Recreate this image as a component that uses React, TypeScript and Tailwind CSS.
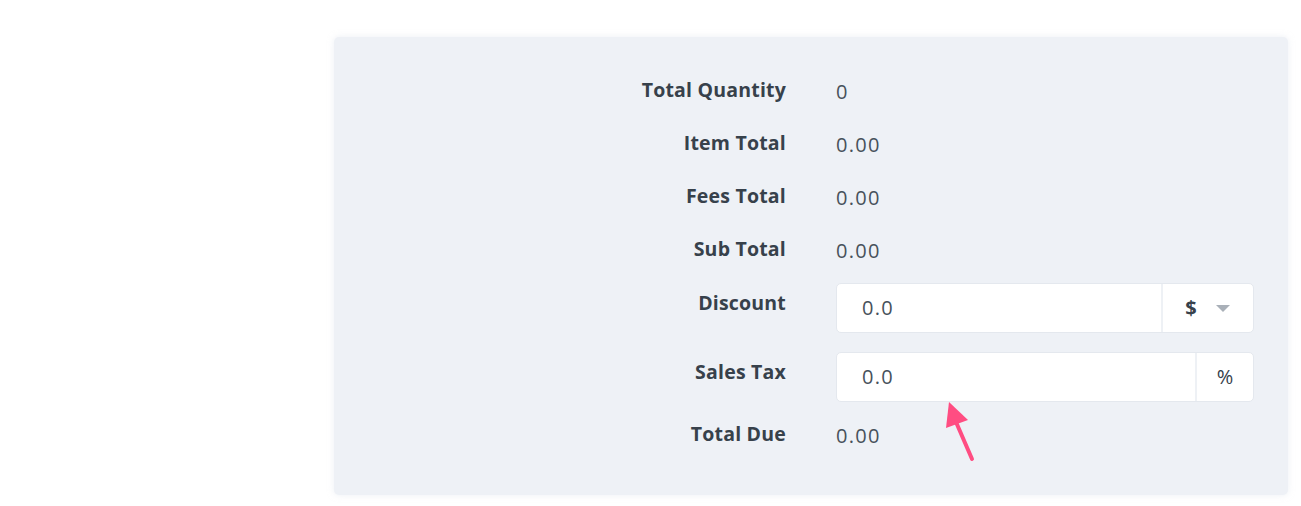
import React from 'react';

const font = { fontFamily: '"Open Sans", Lato, sans-serif' };

const rows = [
  { label: 'Total Quantity', value: '0' },
  { label: 'Item Total', value: '0.00' },
  { label: 'Fees Total', value: '0.00' },
  { label: 'Sub Total', value: '0.00' },
];

const Label: React.FC<{ children: React.ReactNode; top?: boolean }> = ({ children, top }) => (
  <div
    className={`w-[452px] shrink-0 text-right text-[19.5px] leading-6 font-bold tracking-[0.2px] text-[#37414b] ${top ? 'mt-[8px]' : ''}`}
  >
    {children}
  </div>
);

const App: React.FC = () => {
  return (
    <div className="min-h-[506px] w-full bg-white flex pt-[37px] pr-[13px]" style={font}>
      <div className="w-[334px] shrink-0" />
      <div className="relative flex-1 h-[458px] rounded-[5px] bg-[#eef1f6] pt-[26px] pr-[34px] shadow-[0_0_6px_rgba(220,225,235,0.5)]">
        {rows.map((r) => (
          <div key={r.label} className="flex items-center h-[53px]">
            <Label>{r.label}</Label>
            <div className="ml-[50px] pt-1 text-[20px] leading-6 tracking-[1.3px] text-[#47515b]">{r.value}</div>
          </div>
        ))}

        {/* Discount */}
        <div className="flex items-start mt-[8px]">
          <Label top>Discount</Label>
          <div className="ml-[50px] flex-1 flex h-[50px] rounded-[5px] bg-white border border-[#e4e8ee]">
            <div className="flex-1 flex items-center pl-[25px] text-[20px] tracking-[1.3px] text-[#47515b]">0.0</div>
            <div className="w-[92px] flex items-center justify-center gap-[18px] border-l-2 border-[#eef1f5]">
              <span className="text-[20px] font-bold text-[#37414b]">$</span>
              <svg width="16" height="9" viewBox="0 0 16 9">
                <path d="M1 1 L15 1 L8 8 Z" fill="#a9b0b8" />
              </svg>
            </div>
          </div>
        </div>

        {/* Sales Tax */}
        <div className="flex items-start mt-[19px]">
          <Label top>Sales Tax</Label>
          <div className="ml-[50px] flex-1 flex h-[50px] rounded-[5px] bg-white border border-[#e4e8ee]">
            <div className="flex-1 flex items-center pl-[25px] text-[20px] tracking-[1.3px] text-[#47515b]">0.0</div>
            <div className="w-[58px] flex items-center justify-center border-l-2 border-[#eef1f5] text-[20px] text-[#37414b]">
              %
            </div>
          </div>
        </div>

        {/* Total Due */}
        <div className="flex items-center h-[24px] mt-[20px]">
          <Label>Total Due</Label>
          <div className="ml-[50px] pt-1 text-[20px] leading-6 tracking-[1.3px] text-[#47515b]">0.00</div>
        </div>

        <svg className="absolute left-[606px] top-[358px]" width="40" height="70" viewBox="0 0 40 70">
          <path d="M9 7 L6 33 L28 25 Z" fill="#ff4d82" />
          <path d="M16 27 L32 64" stroke="#ff4d82" strokeWidth="4" strokeLinecap="round" />
        </svg>
      </div>
    </div>
  );
};

export default App;
